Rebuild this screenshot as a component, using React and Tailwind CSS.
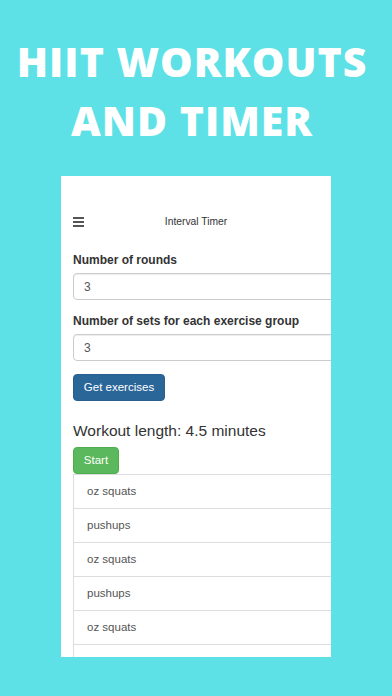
import React from 'react';

const exercises = ['oz squats', 'pushups', 'oz squats', 'pushups', 'oz squats', ''];

const Label = ({ children, className = '' }) => (
  <div className={`h-[16px] leading-[16px] text-[12px] font-bold text-[#333] ${className}`}>{children}</div>
);

const NumberInput = ({ value, className = '' }) => (
  <div
    className={`h-[27px] w-[300px] flex items-center pl-[10px] border border-[#ccc] rounded-[4px] shadow-[inset_0_1px_1px_rgba(0,0,0,0.075)] text-[12px] text-[#555] bg-white ${className}`}
  >
    {value}
  </div>
);

export default function App() {
  return (
    <div
      className="w-[392px] h-[696px] bg-[#5de1e6] overflow-hidden"
      style={{ fontFamily: '"Liberation Sans", Arial, sans-serif' }}
    >
      <h1
        className="pt-[32px] pr-[8px] text-center text-white text-[41px] leading-[59px] font-extrabold tracking-[1px]"
        style={{ fontFamily: '"Open Sans", sans-serif' }}
      >
        HIIT WORKOUTS
        <br />
        AND TIMER
      </h1>

      <div className="ml-[61px] mt-[26px] w-[270px] h-[481px] bg-white overflow-hidden pt-[36px] px-[12px]">
        {/* header */}
        <div className="relative h-[20px] flex items-center">
          <div className="flex flex-col gap-[2px] w-[11px]">
            <span className="h-[2px] bg-[#555]" />
            <span className="h-[2px] bg-[#555]" />
            <span className="h-[2px] bg-[#555]" />
          </div>
          <div className="absolute inset-x-0 text-center text-[10.3px] text-[#333]">Interval Timer</div>
        </div>

        <Label className="mt-[20px]">Number of rounds</Label>
        <NumberInput value="3" className="mt-[5px]" />

        <Label className="mt-[13px]">Number of sets for each exercise group</Label>
        <NumberInput value="3" className="mt-[5px]" />

        <button className="mt-[13px] h-[27px] w-[92px] rounded-[4px] bg-[#2b6699] border border-[#285f8f] text-white text-[11.5px] flex items-center justify-center">
          Get exercises
        </button>

        <div className="mt-[20px] h-[20px] leading-[20px] text-[15.5px] text-[#333]">Workout length: 4.5 minutes</div>

        <button className="mt-[6px] h-[27px] w-[46px] rounded-[4px] bg-[#5cb85c] border border-[#4cae4c] text-white text-[11.5px] flex items-center justify-center">
          Start
        </button>

        <ul className="w-[300px] border-l border-[#ddd]">
          {exercises.map((ex, i) => (
            <li
              key={i}
              className="h-[34px] border-t border-[#ddd] flex items-center pl-[13px] text-[11.5px] text-[#555] bg-white"
            >
              {ex}
            </li>
          ))}
        </ul>
      </div>
    </div>
  );
}
